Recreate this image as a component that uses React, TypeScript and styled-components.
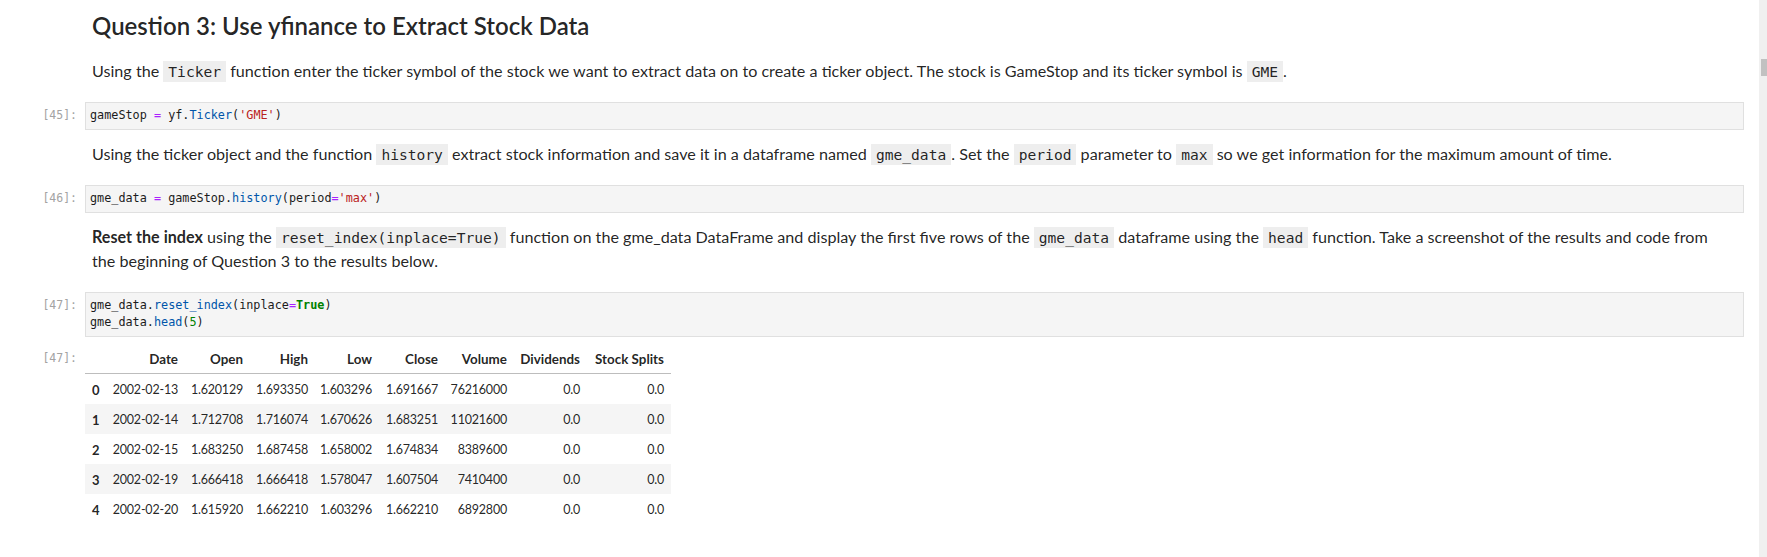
import React from "react";
import styled, { createGlobalStyle, css } from "styled-components";

const Global = createGlobalStyle`
  html, body { margin: 0; padding: 0; background: #ffffff; }
  body { font-family: Lato, "Open Sans", sans-serif; color: rgba(0,0,0,0.87); }
`;

const Page = styled.div`
  display: flex;
  width: 1767px;
  height: 557px;
  overflow: hidden;
  background: #fff;
`;

const Main = styled.div`
  flex: 1;
  display: flex;
  flex-direction: column;
  padding-right: 15px;
  min-width: 0;
`;

const ScrollTrack = styled.div`
  position: relative;
  width: 8px;
  flex: none;
  background: #f0f0f0;
`;

const ScrollThumb = styled.div`
  position: absolute;
  left: 2px;
  right: 0;
  top: 59px;
  height: 17px;
  background: #c1c1c1;
`;

const Cell = styled.div<{ $pt?: number; $pb?: number }>`
  display: flex;
  align-items: flex-start;
  padding-top: ${(p) => p.$pt ?? 0}px;
  padding-bottom: ${(p) => p.$pb ?? 0}px;
`;

const Prompt = styled.div<{ $pt?: number }>`
  flex: none;
  box-sizing: border-box;
  width: 85px;
  padding-right: 8px;
  padding-top: ${(p) => p.$pt ?? 0}px;
  text-align: right;
  font-family: "DejaVu Sans Mono", "Liberation Mono", monospace;
  font-size: 11.5px;
  line-height: 17px;
  color: #a3a3a3;
  white-space: pre;
`;

const Markdown = styled.div`
  flex: 1;
  min-width: 0;
  padding-left: 7px;
  padding-right: 7px;
  font-size: 16.15px;
  line-height: 24px;
`;

const Heading = styled.h2`
  margin: 0 0 18px 0;
  font-size: 24px;
  line-height: 30px;
  font-weight: 600;
  color: rgba(0,0,0,0.87);
`;

const Para = styled.p`
  margin: 0;
  white-space: nowrap;
`;

const InlineCode = styled.code`
  font-family: "DejaVu Sans Mono", "Liberation Mono", monospace;
  font-size: 14.6px;
  line-height: 17px;
  background: #eeeeee;
  padding: 2px 5px;
  color: rgba(0,0,0,0.87);
`;

const CodeBox = styled.div`
  flex: 1;
  min-width: 0;
  background: #f5f5f5;
  border: 1px solid #e0e0e0;
  padding: 4px 4px 5px 4px;
  font-family: "DejaVu Sans Mono", "Liberation Mono", monospace;
  font-size: 11.8px;
  line-height: 17px;
  color: #1c1c1c;
  white-space: pre;
`;

type TokKind = "op" | "prop" | "str" | "num" | "kw";

const tokColor: Record<TokKind, string> = {
  op: "#aa22ff",
  prop: "#0055aa",
  str: "#ba2121",
  num: "#008000",
  kw: "#008000",
};

const Tok = styled.span<{ $k: TokKind }>`
  color: ${(p) => tokColor[p.$k]};
  ${(p) =>
    p.$k === "kw" &&
    css`
      font-weight: bold;
    `}
`;

const Line = styled.div``;

const Output = styled.div`
  flex: 1;
  min-width: 0;
`;

const Table = styled.table`
  border-collapse: collapse;
  border-spacing: 0;
  table-layout: fixed;
  width: 586px;
  font-size: 12.5px;
  line-height: 18px;
  color: rgba(0,0,0,0.87);
`;

const Col = styled.col<{ $w: number }>`
  width: ${(p) => p.$w}px;
`;

const HeadCell = styled.th`
  text-align: right;
  font-weight: bold;
  font-size: 13.4px;
  padding: 6px 7px 5px 0;
  border-bottom: 1px solid #bdbdbd;
  white-space: nowrap;
`;

const Row = styled.tr`
  &:nth-child(even) {
    background: #f5f5f5;
  }
`;

const IndexCell = styled.th`
  text-align: left;
  font-weight: bold;
  font-size: 13px;
  padding: 7px 0 5px 7px;
`;

const DataCell = styled.td`
  text-align: right;
  letter-spacing: -0.2px;
  padding: 7px 7px 5px 0;
  white-space: nowrap;
`;

const columns = ["", "Date", "Open", "High", "Low", "Close", "Volume", "Dividends", "Stock Splits"];
const widths = [20, 80, 65, 65, 64, 66, 69, 73, 84];

const rows: string[][] = [
  ["0", "2002-02-13", "1.620129", "1.693350", "1.603296", "1.691667", "76216000", "0.0", "0.0"],
  ["1", "2002-02-14", "1.712708", "1.716074", "1.670626", "1.683251", "11021600", "0.0", "0.0"],
  ["2", "2002-02-15", "1.683250", "1.687458", "1.658002", "1.674834", "8389600", "0.0", "0.0"],
  ["3", "2002-02-19", "1.666418", "1.666418", "1.578047", "1.607504", "7410400", "0.0", "0.0"],
  ["4", "2002-02-20", "1.615920", "1.662210", "1.603296", "1.662210", "6892800", "0.0", "0.0"],
];

export default function App() {
  return (
    <>
      <Global />
      <Page>
        <Main>
          <Cell $pt={11} $pb={19}>
            <Prompt />
            <Markdown>
              <Heading>Question 3: Use yfinance to Extract Stock Data</Heading>
              <Para>
                Using the <InlineCode>Ticker</InlineCode> function enter the ticker symbol of the stock we want to
                extract data on to create a ticker object. The stock is GameStop and its ticker symbol is{" "}
                <InlineCode>GME</InlineCode>.
              </Para>
            </Markdown>
          </Cell>

          <Cell>
            <Prompt $pt={5}>[45]:</Prompt>
            <CodeBox>
              gameStop <Tok $k="op">=</Tok> yf.<Tok $k="prop">Ticker</Tok>(<Tok $k="str">'GME'</Tok>)
            </CodeBox>
          </Cell>

          <Cell $pt={12} $pb={19}>
            <Prompt />
            <Markdown>
              <Para>
                Using the ticker object and the function <InlineCode>history</InlineCode> extract stock information
                and save it in a dataframe named <InlineCode>gme_data</InlineCode>. Set the{" "}
                <InlineCode>period</InlineCode> parameter to <InlineCode>max</InlineCode> so we get information for
                the maximum amount of time.
              </Para>
            </Markdown>
          </Cell>

          <Cell>
            <Prompt $pt={5}>[46]:</Prompt>
            <CodeBox>
              gme_data <Tok $k="op">=</Tok> gameStop.<Tok $k="prop">history</Tok>(period<Tok $k="op">=</Tok>
              <Tok $k="str">'max'</Tok>)
            </CodeBox>
          </Cell>

          <Cell $pt={12} $pb={19}>
            <Prompt />
            <Markdown>
              <Para>
                <b>Reset the index</b> using the <InlineCode>reset_index(inplace=True)</InlineCode> function on the
                gme_data DataFrame and display the first five rows of the <InlineCode>gme_data</InlineCode> dataframe
                using the <InlineCode>head</InlineCode> function. Take a screenshot of the results and code from
                <br />
                the beginning of Question 3 to the results below.
              </Para>
            </Markdown>
          </Cell>

          <Cell>
            <Prompt $pt={5}>[47]:</Prompt>
            <CodeBox>
              <Line>
                gme_data.<Tok $k="prop">reset_index</Tok>(inplace<Tok $k="op">=</Tok>
                <Tok $k="kw">True</Tok>)
              </Line>
              <Line>
                gme_data.<Tok $k="prop">head</Tok>(<Tok $k="num">5</Tok>)
              </Line>
            </CodeBox>
          </Cell>

          <Cell $pt={7}>
            <Prompt $pt={6}>[47]:</Prompt>
            <Output>
              <Table>
                <colgroup>
                  {widths.map((w, i) => (
                    <Col key={i} $w={w} />
                  ))}
                </colgroup>
                <thead>
                  <tr>
                    {columns.map((c, i) => (
                      <HeadCell key={i}>{c}</HeadCell>
                    ))}
                  </tr>
                </thead>
                <tbody>
                  {rows.map((r) => (
                    <Row key={r[0]}>
                      <IndexCell>{r[0]}</IndexCell>
                      {r.slice(1).map((v, i) => (
                        <DataCell key={i}>{v}</DataCell>
                      ))}
                    </Row>
                  ))}
                </tbody>
              </Table>
            </Output>
          </Cell>
        </Main>
        <ScrollTrack>
          <ScrollThumb />
        </ScrollTrack>
      </Page>
    </>
  );
}
